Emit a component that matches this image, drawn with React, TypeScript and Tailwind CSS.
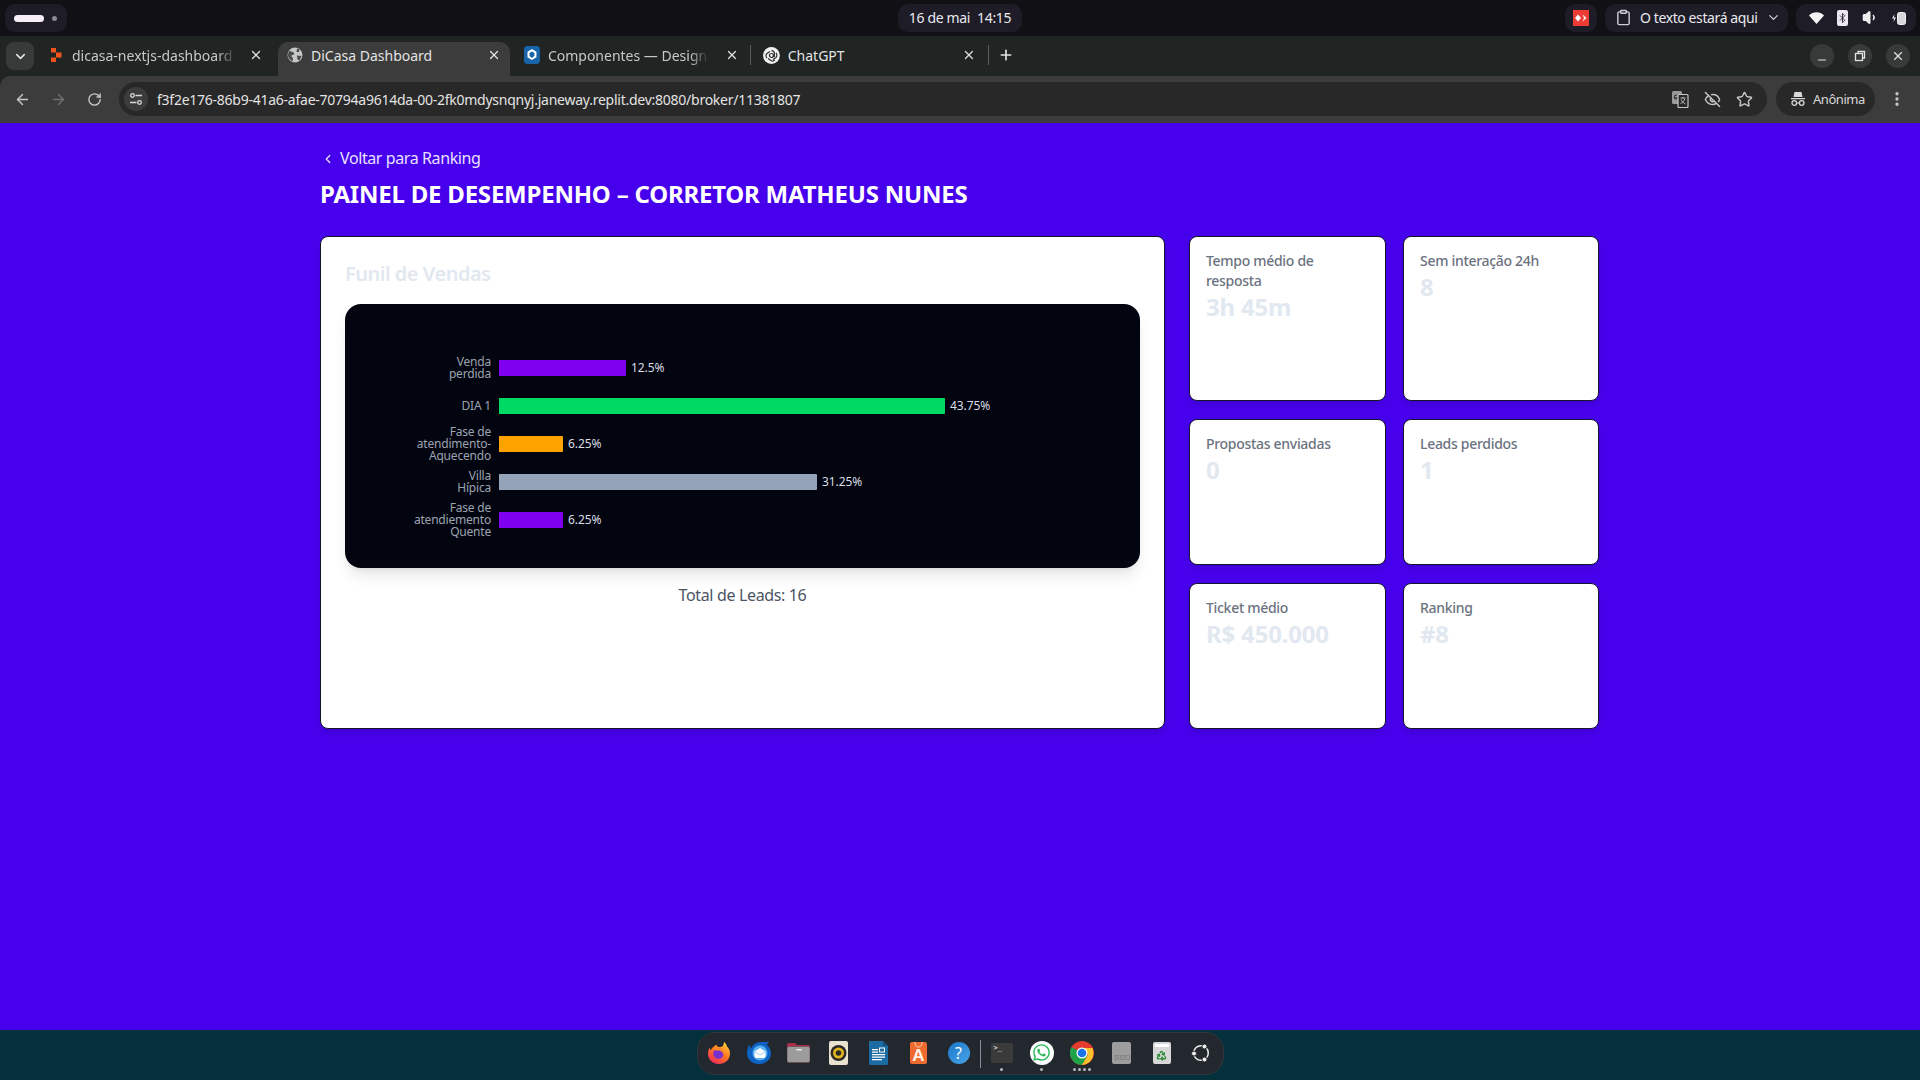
import React from "react";
import {
  ArrowLeft, ArrowRight, RotateCw, ChevronDown, ChevronLeft, X, Plus, Minus, EyeOff, Star, EllipsisVertical,
  Clipboard, Volume1, Bluetooth, Recycle,
} from "lucide-react";
import { FaWhatsapp } from "react-icons/fa";

const ui = "font-['Noto_Sans','Open_Sans',sans-serif]";

function Pill({ className = "", children }: { className?: string; children?: React.ReactNode }) {
  return <div className={`h-7 rounded-[10px] bg-[#1e1c26] flex items-center ${className}`}>{children}</div>;
}

function TopBar() {
  return (
    <div className="h-9 bg-[#111014] flex items-center pl-[5px] pr-1 text-[#e9e9ee] text-[14px] tracking-[-0.35px]">
      <Pill className="w-[62px] pl-[9px] gap-2">
        <span className="w-[30px] h-[7px] rounded-full bg-[#f6eff8]" />
        <span className="w-[5px] h-[5px] rounded-full bg-[#8a8a90]" />
      </Pill>
      <div className="ml-[831px]">
        <Pill className="w-[124px] justify-center gap-[7px] pb-[2px]"><span>16 de mai</span><span>14:15</span></Pill>
      </div>
      <Pill className="w-8 justify-center ml-[543px]">
        <svg width="16" height="16" viewBox="0 0 16 16">
          <rect width="16" height="16" fill="#ef3b36" />
          <path d="M5 4.500 8 8l-3 3.500L2 8z" fill="#fff" />
          <path d="M9.500 4.500 13.500 8l-4 3.500L11 8z" fill="#fff" />
        </svg>
      </Pill>
      <Pill className="w-[183px] ml-2 pl-[10px] pb-[2px]">
        <Clipboard size={17} className="text-[#cfcfd4]" />
        <span className="ml-[8px] w-[122px] whitespace-nowrap tracking-[-0.4px]">O texto estará aqui</span>
        <ChevronDown size={15} className="ml-[4px] text-[#cfcfd4]" />
      </Pill>
      <Pill className="w-[120px] ml-2 pl-[13px] pb-px">
        <svg width="15" height="12" viewBox="0 0 15 12"><path d="M0 3.500C4-.8 11-.8 15 3.500L7.500 12z" fill="#f3f3f6" /></svg>
        <span className="ml-[13px] w-[11px] h-[16px] bg-[#ece8f3] rounded-[2px] flex items-center justify-center">
          <Bluetooth size={12} className="text-[#2b2833]" />
        </span>
        <Volume1 size={17} className="ml-[14px] text-[#eeeeee]" fill="#eeeeee" />
        <svg width="16" height="16" viewBox="0 0 16 16" className="ml-[12px]">
          <path d="M3.500 4 1 8.500h2L2.500 12 5 7.500H3z" fill="#eee" />
          <rect x="6.500" y="2.500" width="8" height="12" rx="2" fill="#d8d8dc" stroke="#f2f2f2" />
        </svg>
      </Pill>
    </div>
  );
}

function ReplitMark() {
  return (
    <svg width="11" height="14" viewBox="0 0 11 14">
      <path d="M0 0h5v4.500H0zM5 4.500h5.500v5H5zM0 9.500h5V14H0z" fill="#f2541b" />
    </svg>
  );
}
function Globe() {
  return (
    <svg width="16" height="16" viewBox="0 0 16 16">
      <circle cx="8" cy="8" r="7.500" fill="#c4c7c5" />
      <path d="M2 4c2 0 3 1 4.500 1.500S7 8 5.500 8 4 10 6 11l-.5 3.500C3 13 1 11 .8 8zM10 1.500l2.500 1L12 5 9.500 5zM10 8.500l4.500.5-2 4.500-2-1z" fill="#4b4d4c" />
    </svg>
  );
}
function HexFav() {
  return (
    <svg width="16" height="18" viewBox="0 0 16 18">
      <rect width="16" height="18" rx="3.500" fill="#1764ab" />
      <path d="M8 3l4.500 2.700v5.600L8 14l-4.500-2.700V5.700z" fill="#fff" />
      <path d="M8 5.500l2.500 1.500v3L8 12 5.500 10V7z" fill="#1764ab" />
    </svg>
  );
}
function GptFav() {
  return (
    <svg width="17" height="17" viewBox="0 0 17 17">
      <circle cx="8.500" cy="8.500" r="8.500" fill="#f1f1f1" />
      <g fill="none" stroke="#2a2c2b" strokeWidth="1.200">
        <circle cx="8.500" cy="8.500" r="2" />
        <path d="M8.500 3.500a3 3 0 0 1 3 3v3.500M13 6a3 3 0 0 1 0 4.500L10 12.500M12 13a3 3 0 0 1-4 .5L5 11.500M4 11a3 3 0 0 1 0-4.500L7 4.500" />
      </g>
    </svg>
  );
}

function TabText({ children, width, active }: { children: React.ReactNode; width: number; active?: boolean }) {
  return (
    <span
      className={`text-[14px] tracking-[0px] whitespace-nowrap overflow-hidden ${active ? "text-[#e3e3e3]" : "text-[#c7c7c7]"}`}
      style={{ width, maskImage: active ? undefined : "linear-gradient(to right, #000 88%, transparent)" }}
    >
      {children}
    </span>
  );
}

function TabStrip() {
  return (
    <div className="h-10 bg-[#202423] flex items-end relative">
      <div className="w-7 h-7 ml-1.5 mb-1.5 rounded-lg bg-[#373a39] flex items-center justify-center">
        <ChevronDown size={15} strokeWidth={2.5} className="text-[#e3e3e3]" />
      </div>
      <div className="w-[244px] h-[34px] pl-[17px] pb-2 flex items-center">
        <ReplitMark />
        <span className="w-[10px]" />
        <TabText width={165}>dicasa-nextjs-dashboard</TabText>
        <X size={14} className="ml-[12px] text-[#dedede]" strokeWidth={2.2} />
      </div>
      <div className="w-[232px] h-[34px] rounded-t-[10px] bg-[#3c3c3c] pl-[9px] pb-2 flex items-center">
        <Globe />
        <span className="w-2" />
        <TabText width={170} active>DiCasa Dashboard</TabText>
        <X size={14} className="ml-[6px] text-[#e3e3e3]" strokeWidth={2.2} />
      </div>
      <div className="w-[241px] h-[34px] pl-[14px] pb-2 flex items-center">
        <HexFav />
        <span className="w-2" />
        <TabText width={162}>Componentes — Design</TabText>
        <X size={14} className="ml-[16px] text-[#dedede]" strokeWidth={2.2} />
        <span className="ml-[11px] h-5 w-px bg-[#5a5d5c]" />
      </div>
      <div className="w-[238px] h-[34px] pl-[12px] pb-2 flex items-center">
        <GptFav />
        <span className="w-2" />
        <TabText width={170} active>ChatGPT</TabText>
        <X size={14} className="ml-[6px] text-[#dedede]" strokeWidth={2.2} />
        <span className="ml-[12px] h-5 w-px bg-[#5a5d5c]" />
      </div>
      <div className="h-[34px] ml-[9px] pb-2 flex items-center">
        <Plus size={16} strokeWidth={2.5} className="text-[#e3e3e3]" />
      </div>
      <div className="absolute right-[10px] top-2 flex gap-[14px]">
        {[
          <Minus key="a" size={12} strokeWidth={2.4} className="translate-y-[4px]" />,
          <svg key="b" width="12" height="12" viewBox="0 0 12 12" fill="none" stroke="#e3e3e3" strokeWidth="1.300"><rect x="1.500" y="3.500" width="7" height="7" /><path d="M4 3.500V1.500h6.500v6.500H8.500" /></svg>,
          <X key="c" size={14} strokeWidth={2} />,
        ].map((ic, i) => (
          <div key={i} className="w-6 h-6 rounded-full bg-[#373a39] text-[#e3e3e3] flex items-center justify-center">{ic}</div>
        ))}
      </div>
    </div>
  );
}

function TranslateIcon() {
  return (
    <svg width="18" height="18" viewBox="0 0 18 18">
      <rect x="1" y="1" width="10" height="13" rx="1.500" fill="#9a9a9a" />
      <path d="M4 7.500h3.200a2 2 0 1 1-.7-2" fill="none" stroke="#3a3a3a" strokeWidth="1.100" />
      <rect x="7" y="4.500" width="10" height="13" rx="1" fill="#282828" stroke="#c7c7c7" strokeWidth="1.200" />
      <path d="M9.500 8h5M12 7v1.500M14 8.500c-.8 2.500-2.300 4-4.500 5M10 9.500c.8 1.800 2.500 3.500 4.500 4.500" fill="none" stroke="#c7c7c7" strokeWidth="0.900" />
    </svg>
  );
}

function Toolbar() {
  return (
    <div className="bg-[#202423]">
      <div className="h-[47px] pb-px bg-[#3c3c3c] rounded-tl-[10px] flex items-center text-[#c7c7c7]">
        <ArrowLeft size={17} className="ml-[14px] text-[#c7c7c7]" />
        <ArrowRight size={17} className="ml-[19px] text-[#6f6f6f]" />
        <RotateCw size={15} className="ml-[20px] text-[#c7c7c7]" strokeWidth={2.2} />
        <div className="ml-[17px] w-[1648px] h-[34px] rounded-full bg-[#282828] flex items-center pl-[5px]">
          <div className="w-6 h-6 rounded-full bg-[#3c3c3c] flex items-center justify-center">
            <svg width="14" height="14" viewBox="0 0 14 14" fill="none" stroke="#d8d8d8" strokeWidth="1.300">
              <circle cx="3.500" cy="3.500" r="1.800" /><path d="M6.500 3.500H13M1 10.500h6.500" /><circle cx="10.500" cy="10.500" r="1.800" />
            </svg>
          </div>
          <span className="ml-[9px] w-[643px] whitespace-nowrap text-[14px] tracking-[-0.25px] text-[#e3e3e3]">
            f3f2e176-86b9-41a6-afae-70794a9614da-00-2fk0mdysnqnyj.janeway.replit.dev:8080/broker/11381807
          </span>
          <span className="ml-[871px]"><TranslateIcon /></span>
          <EyeOff size={17} className="ml-[15px] text-[#c7c7c7]" />
          <Star size={17} className="ml-[15px] text-[#c7c7c7]" />
        </div>
        <div className="ml-[9px] w-[99px] h-[34px] rounded-full bg-[#282828] flex items-center pl-[14px] gap-[7px] text-[#d8d8d8]">
          <svg width="16" height="14" viewBox="0 0 16 14" fill="#d8d8d8">
            <path d="M4.500 0h7l1 5h-9zM1 6h14v1.300H1z" />
            <circle cx="4.300" cy="11" r="2.300" fill="none" stroke="#d8d8d8" strokeWidth="1.300" /><circle cx="11.700" cy="11" r="2.300" fill="none" stroke="#d8d8d8" strokeWidth="1.300" />
            <path d="M6.500 10.500h3v1h-3z" />
          </svg>
          <span className="text-[13px] tracking-[-0.45px] translate-y-px">Anônima</span>
        </div>
        <EllipsisVertical size={18} className="ml-[13px] text-[#c7c7c7]" strokeWidth={2.4} />
      </div>
    </div>
  );
}

const rows = [
  { label: ["Venda", "perdida"], width: 127, color: "bg-[#7f00f0]", value: "12.5%" },
  { label: ["DIA 1"], width: 446, color: "bg-[#00da64]", value: "43.75%" },
  { label: ["Fase de", "atendimento-", "Aquecendo"], width: 64, color: "bg-[#ffa200]", value: "6.25%" },
  { label: ["Villa", "Hípica"], width: 318, color: "bg-[#94a3b8]", value: "31.25%" },
  { label: ["Fase de", "atendiemento", "Quente"], width: 64, color: "bg-[#7f00f0]", value: "6.25%" },
];

function Chart() {
  return (
    <div className="h-[264px] rounded-2xl bg-[#02040f] pt-[45px] pl-[60px] shadow-[0_10px_15px_-3px_rgba(0,0,0,0.1),0_4px_6px_-4px_rgba(0,0,0,0.1)]">
      {rows.map((r) => (
        <div key={r.value + r.label[0]} className="h-[38px] flex items-center">
          <div className="w-[86px] text-right text-[12px] leading-[12px] tracking-[-0.2px] text-[#9ca3af] whitespace-nowrap">
            {r.label.map((l) => <div key={l}>{l}</div>)}
          </div>
          <div className={`ml-2 h-4 rounded-r-[1px] ${r.color}`} style={{ width: r.width }} />
          <span className="ml-[5px] text-[12px] tracking-[-0.1px] text-[#d9dde3]">{r.value}</span>
        </div>
      ))}
    </div>
  );
}

function Stat({ label, value }: { label: string; value: string }) {
  return (
    <div className="rounded-lg border border-[#111827] bg-white px-[16px] py-[14px] shadow-[0_4px_6px_-1px_rgba(0,0,0,0.1)]">
      <div className="text-[14px] leading-5 font-medium tracking-[-0.3px] text-[#6b7280]">{label}</div>
      <div className="text-[24px] leading-8 font-bold tracking-[-0.2px] text-[#e2e8f0]">{value}</div>
    </div>
  );
}

function Page() {
  return (
    <div className="h-[907px] bg-[#4700eb]">
      <div className="w-[1280px] mx-auto">
        <div className="pt-[23px] h-[55px] flex items-start pl-px text-[16px] leading-6 text-[#e9e1ff] tracking-[-0.4px]">
          <ChevronLeft size={14} strokeWidth={2.2} className="mt-[6px]" />
          <span className="ml-[5px]">Voltar para Ranking</span>
        </div>
        <h1 className="h-[58px] text-[24px] leading-[32px] font-bold tracking-[-0.22px] text-white whitespace-nowrap">
          PAINEL DE DESEMPENHO – CORRETOR MATHEUS NUNES
        </h1>
        <div className="flex gap-[24px]">
          <div className="w-[845px] h-[493px] rounded-lg border border-[#111827] bg-white px-6 pt-[23px] shadow-[0_4px_6px_-1px_rgba(0,0,0,0.1)]">
            <h2 className="h-[44px] text-[20px] leading-7 font-semibold tracking-[-0.5px] text-[#e2e8f0]">Funil de Vendas</h2>
            <Chart />
            <p className="mt-[15px] text-center text-[16px] leading-6 tracking-[-0.35px] text-[#4b5563]">Total de Leads: 16</p>
          </div>
          <div className="w-[410px] grid grid-cols-[197px_196px] grid-rows-[165px_146px_146px] gap-x-[17px] gap-y-[18px]">
            <Stat label="Tempo médio de resposta" value="3h 45m" />
            <Stat label="Sem interação 24h" value="8" />
            <Stat label="Propostas enviadas" value="0" />
            <Stat label="Leads perdidos" value="1" />
            <Stat label="Ticket médio" value="R$ 450.000" />
            <Stat label="Ranking" value="#8" />
          </div>
        </div>
      </div>
    </div>
  );
}

function Firefox() {
  return (
    <svg width="24" height="24" viewBox="0 0 24 24">
      <defs>
        <linearGradient id="ff" x1="0.8" y1="0" x2="0.2" y2="1"><stop offset="0" stopColor="#ffd33a" /><stop offset="0.45" stopColor="#ff7a1f" /><stop offset="1" stopColor="#f0265f" /></linearGradient>
      </defs>
      <path d="M12 23C5.500 23 1 18.500 1 12.500 1 10 2 7.500 3 6.500c0 1.500.5 2 1 2.500C5 6 8 5 9.500 3.500c0 2 1.500 2.500 3.500 2.500 2 0 3.500-.5 4-5 1.500 1 2.500 2.500 3 4.500 2 2 3 4.500 3 7C23 18.500 18 23 12 23z" fill="url(#ff)" />
      <circle cx="11.500" cy="12.500" r="5.200" fill="#7a2fd0" />
      <path d="M6 8c3-1.500 7-1 9 .5s2.500 4 1.500 6.500c0-3-2-5.500-5-5.500-2 0-4-.5-5.500-1.500z" fill="#ff8a1e" />
    </svg>
  );
}
function Thunderbird() {
  return (
    <svg width="26" height="24" viewBox="0 0 26 24">
      <path d="M13 23C6 23 1 18.500 1 12 1 9 2 6 3.500 3c.2 2 .6 3.200 1.500 4.500C6.500 4 9 1.800 13 1.200c3.500-.5 7 0 10-.7-.5 1.300-1.300 2.300-2.500 3C23.500 6 25 9 25 12.500 25 18.500 20 23 13 23z" fill="#0d62c4" />
      <circle cx="14" cy="12" r="7.500" fill="#5ab0f0" />
      <path d="M8.500 10.500 14 7l5.500 3.500V15a2 2 0 0 1-2 2h-7a2 2 0 0 1-2-2z" fill="#fff" />
      <path d="M9 11l5 3 5-3" fill="none" stroke="#a9cdf0" strokeWidth="1" />
    </svg>
  );
}
function Folder() {
  return (
    <svg width="23" height="21" viewBox="0 0 23 21">
      <path d="M0 3a2 2 0 0 1 2-2h6l2 2h11a2 2 0 0 1 2 2v3H0z" fill="#a9304c" />
      <rect y="4.500" width="23" height="16" rx="2" fill="#9c9c9c" stroke="#6e4a50" strokeWidth="0.700" />
      <rect x="9.500" y="7" width="5" height="1.500" fill="#efefef" />
    </svg>
  );
}
function Rhythmbox() {
  return (
    <svg width="19" height="24" viewBox="0 0 19 24">
      <rect width="19" height="24" rx="2" fill="#e8e2cf" />
      <circle cx="9.500" cy="12" r="8" fill="#2c2a28" />
      <circle cx="9.500" cy="12" r="5.500" fill="#e3b71d" />
      <circle cx="9.500" cy="12" r="2.800" fill="#2c2a28" />
    </svg>
  );
}
function Writer() {
  return (
    <svg width="19" height="24" viewBox="0 0 19 24">
      <path d="M1 0h13l5 5v17.500a1.500 1.500 0 0 1-1.500 1.500h-16A1.500 1.500 0 0 1 0 22.500V1a1 1 0 0 1 1-1z" fill="#1c6ca4" />
      <path d="M14 0l5 5h-5z" fill="#134f7a" />
      <path d="M3 8h6v1.200H3zM3 10.500h6v1.200H3zM3 13h13v1.200H3zM3 15.500h13v1.200H3zM3 18h10v1.200H3z" fill="#fff" />
      <rect x="10" y="6.500" width="6" height="5" fill="#fff" /><rect x="11" y="7.500" width="4" height="3" fill="#1c6ca4" />
    </svg>
  );
}
function AppCenter() {
  return (
    <div className="relative w-[17px] h-[22px] rounded-[2px] bg-[#ef6a2e] flex items-center justify-center overflow-hidden">
      <svg width="17" height="22" viewBox="0 0 17 22" className="absolute inset-0">
        <path d="M5 0c0 4 1.500 5 3.500 5S12 4 12 0" fill="none" stroke="#ffd7c2" strokeWidth="1" />
      </svg>
      <span className="mt-[5px] text-[17px] leading-none font-bold text-[#fff1e8] font-['Liberation_Sans']">A</span>
    </div>
  );
}
function Help() {
  return (
    <div className="w-[22px] h-[22px] rounded-full bg-[linear-gradient(135deg,#1b75c8,#48a6ea)] flex items-center justify-center text-white text-[16px] leading-none">?</div>
  );
}
function Terminal() {
  return (
    <div className="w-[22px] h-[20px] rounded-[2px] bg-[#3b3b3b] pl-[3px] pt-px font-['DejaVu_Sans_Mono'] text-[7px] leading-[9px] text-white">&gt;_</div>
  );
}
function WhatsApp() {
  return (
    <div className="w-6 h-6 rounded-full bg-white flex items-center justify-center">
      <FaWhatsapp size={19} className="text-[#25b755]" />
    </div>
  );
}
function Chrome() {
  return (
    <svg width="24" height="24" viewBox="0 0 24 24">
      <circle cx="12" cy="12" r="12" fill="#e33b2e" />
      <path d="M12 12 1.600 6 A12 12 0 0 0 12 24 L18 13.500z" fill="#1fa24a" />
      <path d="M12 7h10.400A12 12 0 0 1 12 24l6-10.500z" fill="#fbc02d" />
      <circle cx="12" cy="12" r="5.500" fill="#fff" />
      <circle cx="12" cy="12" r="4.300" fill="#1a73e8" />
    </svg>
  );
}
function Ssd() {
  return (
    <div className="w-[19px] h-[22px] rounded-[2px] bg-[#9d9d9d] relative overflow-hidden">
      <span className="absolute left-[2px] bottom-[2px] text-[8px] leading-none text-[#777] font-['Liberation_Sans']">SSD</span>
    </div>
  );
}
function Trash() {
  return (
    <div className="w-[18px] h-[22px] rounded-[2px] bg-[#d8d8d8] relative flex items-end justify-center pb-[3px]">
      <span className="absolute top-[2px] left-[2px] right-[2px] h-[3px] bg-white" />
      <Recycle size={11} strokeWidth={3} className="text-[#2e8b3a]" />
    </div>
  );
}
function UbuntuLogo() {
  return (
    <svg width="20" height="20" viewBox="0 0 20 20">
      <circle cx="10" cy="10" r="7.300" fill="none" stroke="#ececec" strokeWidth="1.500" />
      <g fill="#ececec" stroke="#23282f" strokeWidth="1">
        <circle cx="3" cy="10.500" r="2.500" /><circle cx="13.500" cy="3.500" r="2.500" /><circle cx="13.500" cy="16.500" r="2.500" />
      </g>
    </svg>
  );
}

function DockItem({ children, dots = 0, last }: { children: React.ReactNode; dots?: number; last?: boolean }) {
  return (
    <div className={`relative h-full flex items-center justify-center ${last ? "w-[38px]" : "w-[40px]"}`}>
      <div className="-translate-y-px">{children}</div>
      {dots > 0 && (
        <div className="absolute bottom-[3px] left-0 right-0 flex justify-center gap-[2px]">
          {Array.from({ length: dots }).map((_, i) => <span key={i} className="w-[3px] h-[3px] rounded-full bg-[#b8b8be]" />)}
        </div>
      )}
    </div>
  );
}

function Dock() {
  return (
    <div className="h-[50px] bg-[#04303c] flex justify-center pt-[2px]">
      <div className="w-[527px] h-[43px] rounded-[18px] bg-[#23282f] border border-[#30363d] flex items-center pl-px">
        <DockItem><Firefox /></DockItem>
        <DockItem><Thunderbird /></DockItem>
        <DockItem><Folder /></DockItem>
        <DockItem><Rhythmbox /></DockItem>
        <DockItem><Writer /></DockItem>
        <DockItem><AppCenter /></DockItem>
        <DockItem><Help /></DockItem>
        <span className="w-px h-7 mx-[1px] bg-[#8c8f94]" />
        <DockItem dots={1}><Terminal /></DockItem>
        <DockItem dots={1}><WhatsApp /></DockItem>
        <DockItem dots={4}><Chrome /></DockItem>
        <DockItem><Ssd /></DockItem>
        <DockItem><Trash /></DockItem>
        <DockItem last><UbuntuLogo /></DockItem>
      </div>
    </div>
  );
}

export default function App() {
  return (
    <div className={`w-[1920px] h-[1080px] overflow-hidden ${ui}`}>
      <TopBar />
      <TabStrip />
      <Toolbar />
      <Page />
      <Dock />
    </div>
  );
}
